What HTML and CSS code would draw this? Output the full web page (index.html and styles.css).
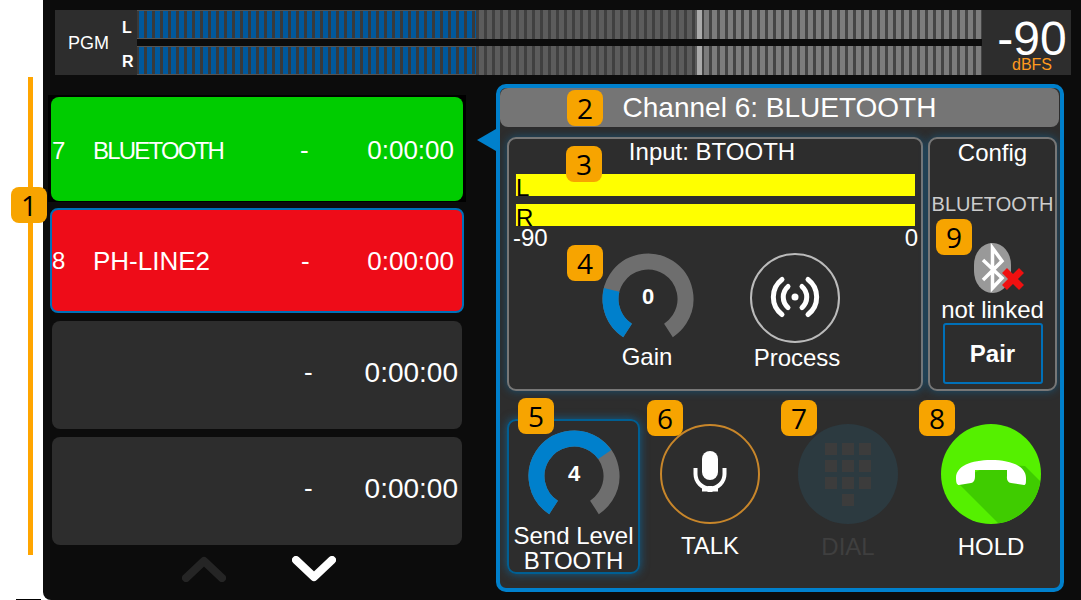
FILE: index.html
```html
<!DOCTYPE html>
<html lang="en">
<head>
  <meta charset="UTF-8">
  <meta name="viewport" content="width=device-width, initial-scale=1.0">
  <title>Channel 6: BLUETOOTH</title>
  <link rel="stylesheet" href="styles.css">
</head>
<body>
  <div class="app">
    <div class="pgm">
      <div class="pgm-label">PGM</div>
      <div class="pgm-sides"><span>L</span><span>R</span></div>
      <div class="pgm-meters">
        <div class="pgm-meter"><div class="seg seg-on"></div><div class="seg seg-off"></div><div class="seg-peak"></div><div class="seg seg-hi"></div></div>
        <div class="pgm-meter pgm-meter-r"><div class="seg seg-on"></div><div class="seg seg-off"></div><div class="seg-peak"></div><div class="seg seg-hi"></div></div>
      </div>
      <div class="readout">
        <div class="readout-num">-90</div>
        <div class="readout-unit">dBFS</div>
      </div>
    </div>

    <div class="main">
      <div class="list">
        <div class="card-slot">
          <div class="card card-green">
            <span class="card-num">7</span><span class="card-name">BLUETOOTH</span><span class="card-dash">-</span><span class="card-time">0:00:00</span>
          </div>
        </div>
        <div class="card card-red">
          <span class="card-num">8</span><span class="card-name">PH-LINE2</span><span class="card-dash">-</span><span class="card-time">0:00:00</span>
        </div>
        <div class="card card-empty">
          <span class="card-dash">-</span><span class="card-time">0:00:00</span>
        </div>
        <div class="card card-empty">
          <span class="card-dash">-</span><span class="card-time">0:00:00</span>
        </div>
        <div class="pager">
          <svg class="chev chev-off" width="44" height="26" viewBox="0 0 44 26"><path d="M4 22 L22 5 L40 22"/></svg>
          <svg class="chev" width="44" height="26" viewBox="0 0 44 26"><path d="M4 4 L22 21 L40 4"/></svg>
        </div>
      </div>

      <div class="panel">
        <div class="panel-head">Channel 6: BLUETOOTH</div>
        <div class="panel-top">
          <div class="box box-input">
            <div class="box-title">Input: BTOOTH</div>
            <div class="in-bar">L</div>
            <div class="in-bar in-bar-r">R</div>
            <div class="in-scale"><span>-90</span><span>0</span></div>
            <div class="controls">
              <div class="ctl ctl-gain">
                <svg class="gauge" width="100" height="100" viewBox="0 0 100 100">
                  <circle class="gauge-bg" cx="50" cy="50" r="37.5" pathLength="360" stroke-dasharray="294 66" transform="rotate(123 50 50)"/>
                  <circle class="gauge-val" cx="50" cy="50" r="37.5" pathLength="360" stroke-dasharray="71 289" transform="rotate(123 50 50)"/>
                  <text class="gauge-num" x="50" y="55">0</text>
                </svg>
                <div class="ctl-label ctl-label-gain">Gain</div>
              </div>
              <div class="ctl ctl-process">
                <div class="process-btn">
                  <svg width="86" height="86" viewBox="0 0 86 86">
                    <circle class="process-dot" cx="43" cy="42" r="3.5"/>
                    <path class="process-wave" d="M36 31.5 A14 14 0 0 0 36 52.5 M50 31.5 A14 14 0 0 1 50 52.5 M30 24.5 A22 22 0 0 0 30 59.5 M56 24.5 A22 22 0 0 1 56 59.5"/>
                  </svg>
                </div>
                <div class="ctl-label">Process</div>
              </div>
            </div>
          </div>
          <div class="box box-config">
            <div class="box-title">Config</div>
            <div class="config-name">BLUETOOTH</div>
            <svg class="bt-icon" width="54" height="50" viewBox="0 0 54 50">
              <rect x="0" y="0" width="37" height="50" rx="18" ry="22" fill="#999"/>
              <path d="M9 17 L28 35 L18.5 45 V5 L28 18 L9 37" fill="none" stroke="#fff" stroke-width="3.5"/>
              <path d="M30.5 27.5 L47.5 44.5 M47.5 27.5 L30.5 44.5" fill="none" stroke="#f01010" stroke-width="7"/>
            </svg>
            <div class="config-status">not linked</div>
            <div class="pair-btn">Pair</div>
          </div>
        </div>
        <div class="panel-bottom">
          <div class="send">
            <svg class="gauge" width="100" height="100" viewBox="0 0 100 100">
              <circle class="gauge-bg" cx="50" cy="50" r="37.5" pathLength="360" stroke-dasharray="294 66" transform="rotate(123 50 50)"/>
              <circle class="gauge-val" cx="50" cy="50" r="37.5" pathLength="360" stroke-dasharray="202 158" transform="rotate(123 50 50)"/>
              <text class="gauge-num" x="50" y="55">4</text>
            </svg>
            <div class="send-label">Send Level<br>BTOOTH</div>
          </div>
          <div class="action action-talk">
            <div class="round round-talk">
              <svg width="96" height="96" viewBox="0 0 96 96">
                <rect x="40" y="25" width="16" height="29" rx="8" fill="#fff"/>
                <path d="M33.5 42 v6 a14.5 14.5 0 0 0 29 0 v-6" fill="none" stroke="#fff" stroke-width="4"/>
                <rect x="45.5" y="60" width="5" height="6" fill="#fff"/>
                <rect x="40" y="62" width="16" height="3.5" fill="#fff"/>
              </svg>
            </div>
            <div class="action-label action-label-talk">TALK</div>
          </div>
          <div class="action action-dial">
            <div class="round round-dial">
              <div class="keypad">
                <i></i><i></i><i></i><i></i><i></i><i></i><i></i><i></i><i></i><i class="key-zero"></i>
              </div>
            </div>
            <div class="action-label action-label-off">DIAL</div>
          </div>
          <div class="action action-hold">
            <div class="round round-hold">
              <svg width="100" height="100" viewBox="0 0 100 100">
                <defs><clipPath id="holdClip"><circle cx="50" cy="50" r="50"/></clipPath></defs>
                <polygon points="16,58 60,102 102,102 102,60 84,42 50,40" fill="#3fcc00" clip-path="url(#holdClip)"/>
                <path d="M15 54 C15 42 30 36 50 36 C70 36 85 42 85 54 C85 59 85 61 83 61 L70 59 C67 58.5 65.5 56 66 52 L66 46 L34 46 L34 52 C34 56 33 58.5 30 59 L18 61 C16 61 15 59 15 54 Z" fill="#fff"/>
              </svg>
            </div>
            <div class="action-label">HOLD</div>
          </div>
        </div>
      </div>
    </div>
  </div>

  <!-- callouts lying over the screen -->
  <div class="rail"></div>
  <div class="pointer"></div>
  <div class="foot-line"></div>
  <div class="badge badge-1">1</div>
  <div class="badge badge-2">2</div>
  <div class="badge badge-3">3</div>
  <div class="badge badge-4">4</div>
  <div class="badge badge-5">5</div>
  <div class="badge badge-6">6</div>
  <div class="badge badge-7">7</div>
  <div class="badge badge-8">8</div>
  <div class="badge badge-9">9</div>
</body>
</html>
```

FILE: styles.css
```css
html, body {
  margin: 0;
  height: 600px;
  overflow: hidden;
  background-color: #fff;
  font-family: 'Liberation Sans', Arial, sans-serif;
  color: #fff;
}

.app {
  margin-left: 43px;
  height: 600px;
  padding-top: 10px;
  box-sizing: border-box;
  background-color: #0c0c0c;
  border-bottom-left-radius: 8px;
}

/* program meter */
.pgm {
  display: flex;
  width: 1016px;
  height: 65px;
  margin-left: 12px;
  background-color: #2d2d2d;
}

.pgm-label {
  width: 65px;
  padding-left: 13px;
  box-sizing: border-box;
  font-size: 18px;
  line-height: 66px;
}

.pgm-sides {
  display: flex;
  flex-direction: column;
  justify-content: space-between;
  width: 17px;
  padding: 8px 0 3px 2px;
  box-sizing: border-box;
  font-size: 16px;
  font-weight: bold;
  line-height: 20px;
}

.pgm-meters {
  display: flex;
  flex-direction: column;
  width: 845px;
  background-color: #0c0c0c;
}

.pgm-meter {
  display: flex;
  height: 29px;
}

.pgm-meter-r {
  height: 29px;
  margin-top: 7px;
}

.seg {
  height: 100%;
  box-sizing: border-box;
}

.seg-on {
  width: 339px;
  border-top: 1px solid #555;
  border-bottom: 1px solid #555;
  background: repeating-linear-gradient(90deg, #3a3a3a 0 2px, #00589c 2px 7px, #3a3a3a 7px 8px);
}

.seg-off {
  width: 221px;
  background: repeating-linear-gradient(90deg, #404040 0 3px, #5c5c5c 3px 8px);
}

.seg-peak {
  width: 5px;
  background-color: #aaa;
}

.seg-hi {
  width: 280px;
  background: repeating-linear-gradient(90deg, #444 0 2px, #7c7c7c 2px 7px, #444 7px 8px);
}

.readout {
  flex: 1;
  padding-left: 11px;
  text-align: center;
}

.readout-num {
  font-size: 48px;
  line-height: 36px;
  margin-top: 11px;
}

.readout-unit {
  font-size: 16px;
  line-height: 14px;
  margin-top: 1px;
  color: #ff9a1e;
}

/* layout below the meter */
.main {
  display: flex;
  margin-top: 9px;
  padding-left: 8px;
}

.list {
  width: 412px;
  padding-top: 13px;
  margin-right: 33px;
}

.card {
  display: flex;
  align-items: center;
  box-sizing: border-box;
  border-radius: 8px;
  font-size: 24px;
}

.card-num {
  width: 42px;
  padding-left: 1px;
  box-sizing: border-box;
}

.card-name {
  width: 207px;
  letter-spacing: -1.8px;
}

.card-dash {
  font-size: 26px;
}

.card-time {
  margin-left: auto;
  padding-right: 9px;
  font-size: 26px;
}

.card-slot {
  margin: -2px -3px -1px;
  padding: 2px 3px 1px;
  background-color: #000;
}

.card-green {
  height: 104px;
  padding-top: 3px;
  background-color: #00cc00;
}

.card-red {
  height: 105px;
  margin: 7px -1px 0;
  padding-top: 1px;
  background-color: #ee0c18;
  border: 2px solid #0070b8;
}

.card-red .card-num {
  width: 41px;
  padding-left: 0;
}

.card-red .card-name {
  width: 208px;
  font-size: 26px;
  letter-spacing: 0;
}

.card-red .card-time {
  padding-right: 8px;
}

.card-empty {
  height: 108px;
  margin: 8px 1px 0;
  padding-bottom: 5px;
  background-color: #2d2d2d;
}

.card-empty .card-dash {
  margin-left: 252px;
}

.card-empty .card-time {
  padding-right: 4px;
  font-size: 28px;
}

.pager {
  display: flex;
  gap: 66px;
  margin-top: 11px;
  padding-left: 131px;
}

.chev path {
  fill: none;
  stroke: #fff;
  stroke-width: 8;
  stroke-linecap: round;
  stroke-linejoin: round;
}

.chev-off path {
  stroke: #252525;
}

/* channel panel */
.panel {
  width: 568px;
  height: 508px;
  box-sizing: border-box;
  background-color: #2d2d2d;
  border: 4px solid #0080cc;
  border-radius: 10px;
}

.panel-head {
  height: 39px;
  margin-right: 1px;
  background-color: #757575;
  border-radius: 8px;
  font-size: 28px;
  line-height: 40px;
  text-align: center;
}

.panel-top {
  display: flex;
  gap: 5px;
  margin-top: 10px;
  padding-left: 7px;
}

.box {
  box-sizing: border-box;
  height: 254px;
  background-color: #2d2d2d;
  border: 2px solid #777;
  border-radius: 9px;
  box-shadow: 0 0 10px rgba(0, 128, 204, 0.45);
}

.box-input {
  width: 416px;
}

.box-input .box-title {
  padding-right: 6px;
}

.box-config {
  width: 129px;
  display: flex;
  flex-direction: column;
  align-items: center;
}

.box-title {
  font-size: 24px;
  line-height: 26px;
  text-align: center;
}

.box-config .box-title {
  line-height: 28px;
}

.in-bar {
  box-sizing: border-box;
  width: 400px;
  height: 22px;
  margin: 9px 0 0 6px;
  padding: 5px 0 0 0;
  background-color: #ff0;
  border-left: 1px solid #333;
  color: #000;
  font-size: 24px;
  line-height: 17px;
}

.in-bar-r {
  margin-top: 8px;
}

.in-scale {
  display: flex;
  justify-content: space-between;
  width: 405px;
  margin-left: 4px;
  font-size: 24px;
  line-height: 24px;
}

.controls {
  display: flex;
  margin-top: -1px;
}

.ctl {
  display: flex;
  flex-direction: column;
  align-items: center;
  width: 100px;
}

.ctl-gain {
  margin-left: 89px;
}

.ctl-process {
  margin-left: 47px;
}

.ctl-label {
  font-size: 24px;
  line-height: 26px;
  margin-top: 2px;
  padding-left: 4px;
}

.ctl-label-gain {
  margin-top: -5px;
  padding-left: 0;
  padding-right: 2px;
}

.gauge-bg, .gauge-val {
  fill: none;
  stroke-width: 16;
}

.gauge-bg {
  stroke: #6e6e6e;
}

.gauge-val {
  stroke: #0080cc;
}

.gauge-num {
  fill: #fff;
  font-size: 22px;
  font-weight: bold;
  text-anchor: middle;
}

.process-btn {
  box-sizing: border-box;
  width: 90px;
  height: 90px;
  margin-top: 4px;
  border: 2px solid #bbb;
  border-radius: 50%;
}

.process-btn svg {
  display: block;
}

.process-dot {
  fill: #fff;
}

.process-wave {
  fill: none;
  stroke: #fff;
  stroke-width: 5;
  stroke-linecap: round;
}

.config-name {
  margin-top: 25px;
  font-size: 20px;
  line-height: 24px;
  color: #ccc;
}

.bt-icon {
  display: block;
  margin: 27px 0 0 17px;
}

.config-status {
  font-size: 24px;
  line-height: 26px;
  margin-top: 4px;
}

.pair-btn {
  box-sizing: border-box;
  width: 100px;
  height: 61px;
  border: 2px solid #0070b8;
  border-radius: 3px;
  font-size: 24px;
  font-weight: bold;
  line-height: 57px;
  text-align: center;
}

.panel-bottom {
  display: flex;
  margin-top: 28px;
  padding-left: 7px;
}

.send {
  box-sizing: border-box;
  width: 133px;
  height: 155px;
  padding-top: 5px;
  border: 2px solid #005f93;
  border-radius: 9px;
  box-shadow: 0 0 10px rgba(0, 128, 204, 0.6);
  text-align: center;
}

.send .gauge {
  display: block;
  margin: 0 auto -3px;
}

.send-label {
  font-size: 24px;
  line-height: 25px;
}

.action {
  display: flex;
  flex-direction: column;
  align-items: center;
  width: 100px;
  padding-top: 5px;
}

.action-talk {
  margin-left: 20px;
}

.action-dial {
  margin-left: 38px;
}

.action-hold {
  margin-left: 43px;
}

.round {
  box-sizing: border-box;
  width: 100px;
  height: 100px;
  border-radius: 50%;
  overflow: hidden;
}

.round svg {
  display: block;
}

.round-talk {
  border: 2px solid #c8862a;
}

.round-dial {
  display: flex;
  align-items: center;
  justify-content: center;
  background-color: #2c3a40;
}

.round-hold {
  background-color: #55f000;
}

.keypad {
  display: grid;
  grid-template-columns: repeat(3, 12px);
  grid-auto-rows: 12px;
  gap: 5px;
}

.keypad i {
  background-color: #3c3c3c;
}

.keypad .key-zero {
  grid-column: 2;
}

.action-label {
  margin-top: 11px;
  font-size: 24px;
  line-height: 24px;
}

.action-label-talk {
  margin-top: 10px;
}

.action-label-off {
  color: #3f3f3f;
}

/* callouts */
.badge {
  position: absolute;
  width: 36px;
  height: 36px;
  background-color: #f7a400;
  border-radius: 8px;
  color: #000;
  font-family: 'Open Sans', 'Noto Sans', sans-serif;
  font-size: 28px;
  line-height: 36px;
  text-align: center;
}

.badge-1 { left: 11px; top: 187px; }
.badge-2 { left: 567px; top: 90px; }
.badge-3 { left: 566px; top: 146px; }
.badge-4 { left: 567px; top: 245px; }
.badge-5 { left: 518px; top: 398px; }
.badge-6 { left: 647px; top: 400px; }
.badge-7 { left: 781px; top: 400px; }
.badge-8 { left: 919px; top: 400px; }
.badge-9 { left: 936px; top: 219px; }

.rail {
  position: absolute;
  left: 28px;
  top: 77px;
  width: 5px;
  height: 478px;
  background-color: #ffa500;
}

.pointer {
  position: absolute;
  left: 477px;
  top: 129px;
  border-style: solid;
  border-width: 11px 19px 11px 0;
  border-color: transparent #0080cc transparent transparent;
}

.foot-line {
  position: absolute;
  left: 16px;
  top: 599px;
  width: 25px;
  height: 1px;
  background-color: #000;
}
```
